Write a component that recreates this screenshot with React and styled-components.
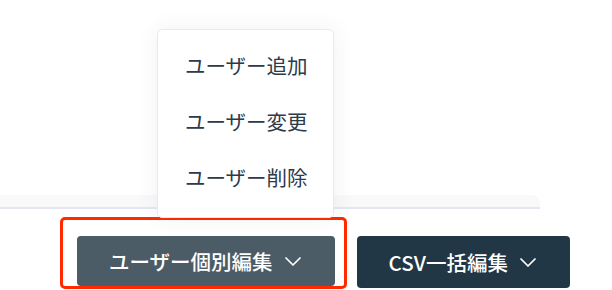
import React from 'react';
import styled, { createGlobalStyle } from 'styled-components';

const GlobalStyle = createGlobalStyle`
  html, body {
    margin: 0;
    padding: 0;
    background: #ffffff;
    overflow: hidden;
  }
  body {
    font-family: "Noto Sans CJK JP", "Noto Sans", sans-serif;
  }
`;

const Page = styled.div`
  position: relative;
  width: 612px;
  height: 290px;
  overflow: hidden;
`;

const TopArea = styled.div`
  height: 195px;
`;

const TableEdge = styled.div`
  width: 540px;
  height: 14px;
  background: #f9f9fa;
  border-top-right-radius: 8px;
  border-bottom: 2px solid #e4e7f3;
  box-sizing: border-box;
`;

const Toolbar = styled.div`
  display: flex;
  align-items: flex-start;
  margin-top: 8px;
  padding-left: 60px;
`;

const Highlight = styled.div`
  display: flex;
  padding: 16px 9px 0 14px;
  border: 3px solid #ff2a00;
  border-radius: 5px;
`;

const Button = styled.button`
  display: flex;
  align-items: center;
  gap: 12px;
  height: ${({ $height }) => $height || 50}px;
  padding: 0 34px 0 32px;
  border: none;
  border-radius: 4px;
  background: ${({ $dark }) => ($dark ? '#213745' : '#4b5c67')};
  color: #ffffff;
  font-family: "Noto Sans CJK JP", "Noto Sans", sans-serif;
  font-size: 20.5px;
  font-weight: 500;
  cursor: pointer;
  margin-left: ${({ $gap }) => $gap || 0}px;
  margin-top: ${({ $top }) => $top || 0}px;
`;

const Menu = styled.ul`
  position: absolute;
  left: 157px;
  top: 29px;
  width: 177px;
  margin: 0;
  padding: 7px 0 12px;
  list-style: none;
  background: #ffffff;
  border: 1px solid #e8e9f2;
  border-radius: 5px;
  box-sizing: border-box;
  box-shadow: 0 0 22px rgba(40, 50, 90, 0.07);
`;

const MenuItem = styled.li`
  height: 56px;
  display: flex;
  align-items: center;
  padding-left: 27px;
  font-size: 20.5px;
  color: #2c3a4b;
  white-space: nowrap;
`;

const Chevron = () => (
  <svg width="16" height="9" viewBox="0 0 16 9" fill="none">
    <polyline points="1,1 8,8 15,1" stroke="#ffffff" strokeWidth="1.7" strokeLinecap="round" strokeLinejoin="round" />
  </svg>
);

export default function App() {
  return (
    <>
      <GlobalStyle />
      <Page>
        <TopArea />
        <TableEdge />
        <Toolbar>
          <Highlight>
            <Button>
              ユーザー個別編集
              <Chevron />
            </Button>
          </Highlight>
          <Button $dark $gap={10} $top={19} $height={52}>
            CSV一括編集
            <Chevron />
          </Button>
        </Toolbar>
        <Menu>
          <MenuItem>ユーザー追加</MenuItem>
          <MenuItem>ユーザー変更</MenuItem>
          <MenuItem>ユーザー削除</MenuItem>
        </Menu>
      </Page>
    </>
  );
}
